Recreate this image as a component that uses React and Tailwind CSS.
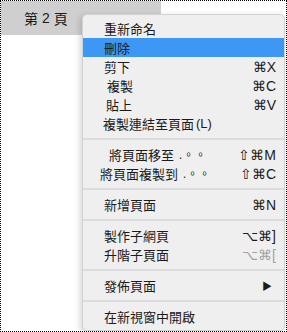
const items = [
  { label: "重新命名", pad: "pl-[21px]" },
  { label: "刪除", pad: "pl-[21px]", active: true },
  { label: "剪下", pad: "pl-[21px]", key: "⌘X" },
  { label: "複製", pad: "pl-[24px]", key: "⌘C" },
  { label: "貼上", pad: "pl-[23px]", key: "⌘V" },
  { label: "複製連結至頁面", extra: "(L)", pad: "pl-[20px]" },
  "sep",
  { label: "將頁面移至", dots: true, pad: "pl-[26px]", key: "⇧⌘M" },
  { label: "將頁面複製到", dots: true, pad: "pl-[17px]", key: "⇧⌘C" },
  "sep",
  { label: "新增頁面", pad: "pl-[21px]", key: "⌘N" },
  "sep",
  { label: "製作子網頁", pad: "pl-[21px]", key: "⌥⌘]" },
  { label: "升階子頁面", pad: "pl-[21px]", key: "⌥⌘[", disabled: true },
  "sep",
  { label: "發佈頁面", pad: "pl-[21px]", arrow: true },
  "sep",
  { label: "在新視窗中開啟", pad: "pl-[21px]" },
];

export default function App() {
  return (
    <div className="relative h-[332px] w-[287px] overflow-hidden border border-dotted border-black bg-white font-['Noto_Sans_CJK_TC','Liberation_Sans',sans-serif] text-[#1b1b1b]">
      {/* Page tab */}
      <div className="flex h-[34px] w-[160px] items-center bg-[#cfcfcf] pl-[23px] text-[14px]">
        第<span className="mx-[4px] font-['Liberation_Sans',sans-serif] text-[14px]">2</span>頁
      </div>

      {/* Context menu */}
      <div className="absolute left-[81px] top-[13px] w-[203px] rounded-[5px] border border-[#d2d2d2] bg-[#efefef] py-[4px] shadow-[-2px_2px_6px_rgba(0,0,0,0.16)]">
        {items.map((it, idx) =>
          it === "sep" ? (
            <div key={idx} className="flex h-[12px] items-center">
              <div className="h-[2px] w-full bg-[#dcdcdc]" />
            </div>
          ) : (
            <div
              key={idx}
              className={`flex h-[19px] items-center justify-between pr-[8px] text-[13px] leading-none ${it.pad} ${
                it.active ? "bg-[#3d97f5]" : ""
              }`}
            >
              <span className="flex items-center">
                {it.label}
                {it.extra && (
                  <span className="ml-[2px] font-['Liberation_Sans',sans-serif] text-[13px]">{it.extra}</span>
                )}
                {it.dots && <span className="ml-[5px] text-[11px] tracking-[1px]">.。。</span>}
              </span>
              {it.key && (
                <span
                  className={`font-['Liberation_Sans',sans-serif] text-[14px] ${
                    it.disabled ? "text-[#a3a3a3]" : "text-[#1b1b1b]"
                  }`}
                >
                  {it.key}
                </span>
              )}
              {it.arrow && <span className="pr-[4px] text-[10px]">▶</span>}
            </div>
          ),
        )}
      </div>
    </div>
  );
}
